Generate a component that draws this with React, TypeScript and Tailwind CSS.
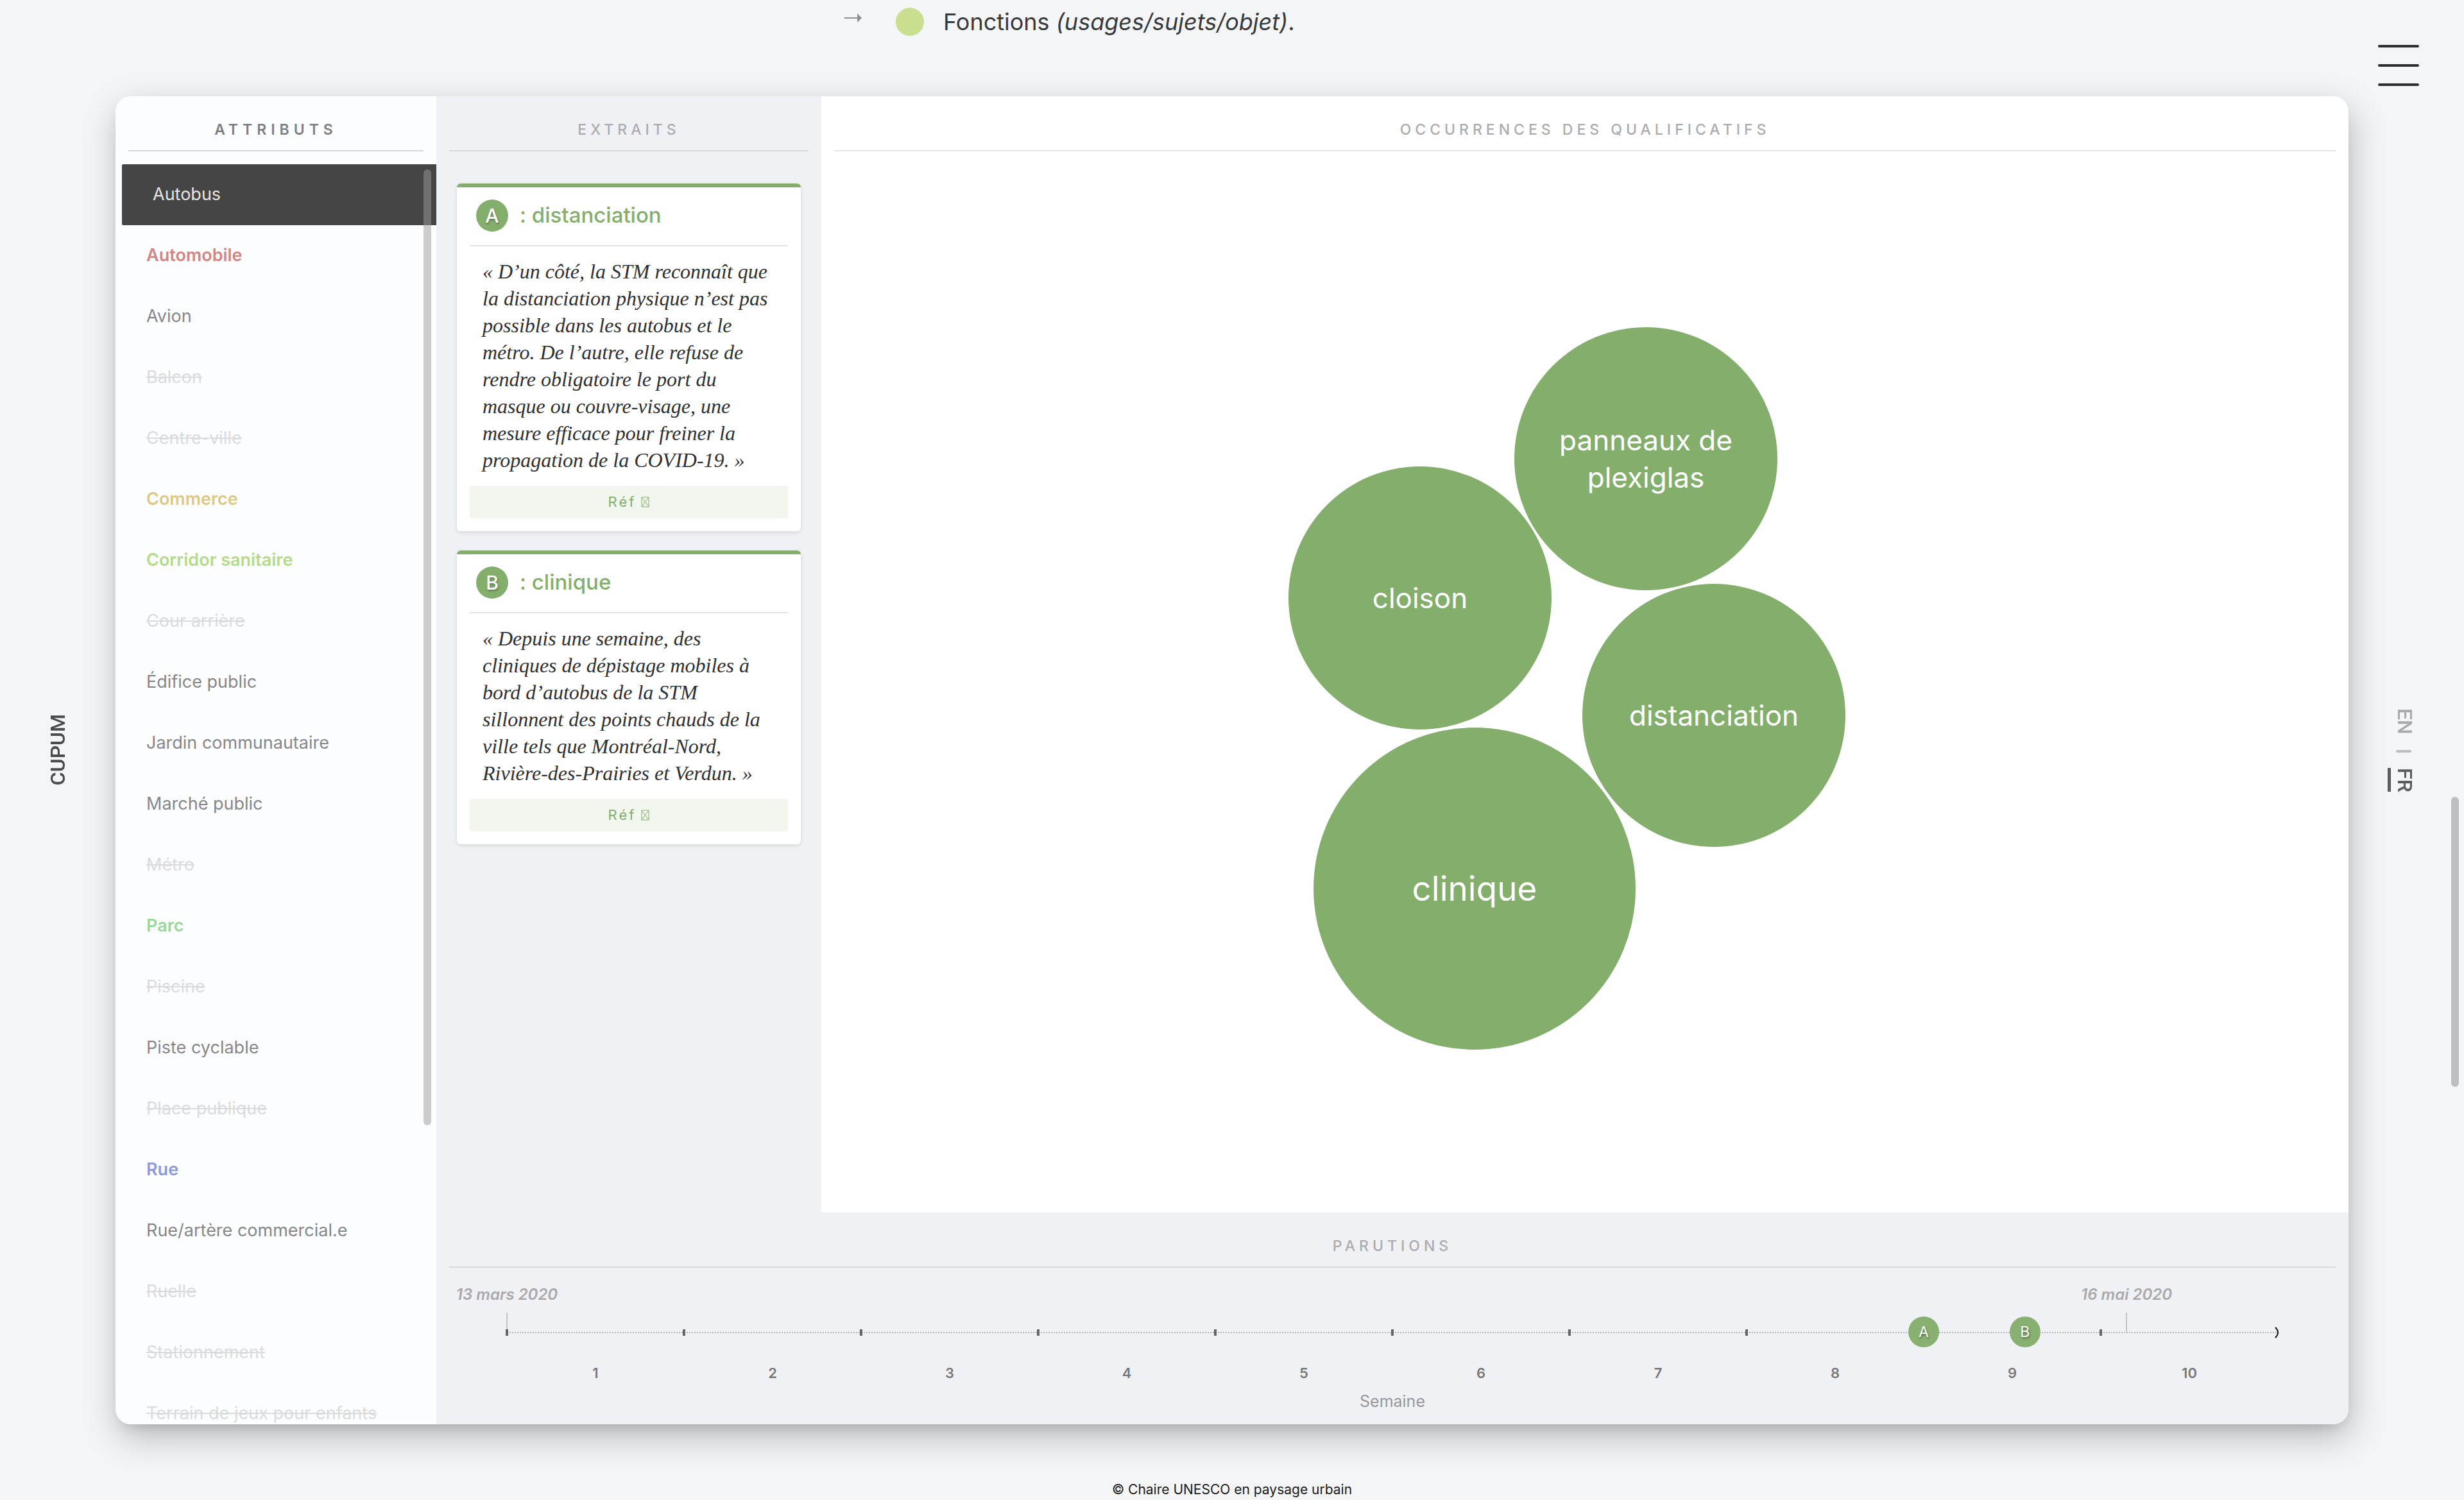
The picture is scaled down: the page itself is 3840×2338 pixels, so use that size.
import React from "react";

type Tone = "normal" | "off" | "active" | "red" | "gold" | "lime" | "mint" | "blue";

const TONES: Record<Tone, string> = {
  normal: "ml-2.5 pl-[38px] text-[#868789]",
  off: "ml-2.5 pl-[38px] text-[#dadbdd] line-through decoration-2",
  active: "ml-2.5 pl-12 rounded-l-xs bg-[#454545] text-[#e6e6e6]",
  red: "ml-2.5 pl-[38px] font-semibold text-[#d08785]",
  gold: "ml-2.5 pl-[38px] font-semibold text-[#dcc887]",
  lime: "ml-2.5 pl-[38px] font-semibold text-[#b4dc88]",
  mint: "ml-2.5 pl-[38px] font-semibold text-[#97d99c]",
  blue: "ml-2.5 pl-[38px] font-semibold text-[#8e9adb]",
};

const ATTRIBUTES: [string, Tone][] = [
  ["Autobus", "active"],
  ["Automobile", "red"],
  ["Avion", "normal"],
  ["Balcon", "off"],
  ["Centre-ville", "off"],
  ["Commerce", "gold"],
  ["Corridor sanitaire", "lime"],
  ["Cour arrière", "off"],
  ["Édifice public", "normal"],
  ["Jardin communautaire", "normal"],
  ["Marché public", "normal"],
  ["Métro", "off"],
  ["Parc", "mint"],
  ["Piscine", "off"],
  ["Piste cyclable", "normal"],
  ["Place publique", "off"],
  ["Rue", "blue"],
  ["Rue/artère commercial.e", "normal"],
  ["Ruelle", "off"],
  ["Stationnement", "off"],
  ["Terrain de jeux pour enfants", "off"],
];

const EXTRACTS = [
  {
    letter: "A",
    word: "distanciation",
    lines: [
      "« D’un côté, la STM reconnaît que",
      "la distanciation physique n’est pas",
      "possible dans les autobus et le",
      "métro. De l’autre, elle refuse de",
      "rendre obligatoire le port du",
      "masque ou couvre-visage, une",
      "mesure efficace pour freiner la",
      "propagation de la COVID-19. »",
    ],
  },
  {
    letter: "B",
    word: "clinique",
    lines: [
      "« Depuis une semaine, des",
      "cliniques de dépistage mobiles à",
      "bord d’autobus de la STM",
      "sillonnent des points chauds de la",
      "ville tels que Montréal-Nord,",
      "Rivière-des-Prairies et Verdun. »",
    ],
  },
];

const BUBBLES = [
  { x: 1285, y: 565, r: 205, size: 44, lines: ["panneaux de", "plexiglas"] },
  { x: 933, y: 782, r: 205, size: 44, lines: ["cloison"] },
  { x: 1391, y: 965, r: 205, size: 44, lines: ["distanciation"] },
  { x: 1018, y: 1235, r: 251, size: 53, lines: ["clinique"] },
];

const WEEKS = [1, 2, 3, 4, 5, 6, 7, 8, 9, 10];

const MARKERS = [
  { letter: "A", day: 80 },
  { letter: "B", day: 85.72 },
];

function PanelTitle({ children, strong = false }: { children: string; strong?: boolean }) {
  return (
    <h2
      className={
        strong
          ? "mx-5 border-b-2 border-[#d6d7d8] pt-9 pb-4 text-center text-[23px] leading-8 font-semibold tracking-[7px] text-[#7e7f80]"
          : "mx-5 border-b-2 border-black/10 pt-9 pb-4 text-center text-[23px] leading-8 font-medium tracking-[6px] text-[#acacae]"
      }
    >
      {children}
    </h2>
  );
}

function AttributePanel() {
  return (
    <aside className="relative row-span-2 flex flex-col overflow-hidden bg-[#fcfdff] [contain:size]">
      <PanelTitle strong>ATTRIBUTS</PanelTitle>
      <ul className="mt-5 min-h-0 flex-1 overflow-hidden">
        {ATTRIBUTES.map(([name, tone]) => (
          <li key={name} className="flex h-[95px]">
            <button type="button" className={`flex-1 text-left text-[27px] ${TONES[tone]}`}>
              {name}
            </button>
          </li>
        ))}
      </ul>
      <div className="absolute top-[114px] right-2 h-[72%] w-3 rounded-full bg-[#9b9b9b]/50" />
    </aside>
  );
}

function MissingGlyph() {
  return (
    <svg viewBox="0 0 13 17" className="h-[17px] w-[13px]" fill="none" stroke="currentColor" aria-hidden="true">
      <path d="M1 1h11v15H1zM1 1l11 15M12 1L1 16" />
    </svg>
  );
}

function ExtractPanel() {
  return (
    <section className="bg-[#f0f1f5]">
      <PanelTitle>EXTRAITS</PanelTitle>
      <div className="mx-8 mt-[50px] flex flex-col gap-[30px]">
        {EXTRACTS.map((e) => (
          <article
            key={e.letter}
            className="rounded-md border-t-6 border-[#84ae6c] bg-white px-5 pb-5 shadow-[0_2px_6px_rgba(0,0,0,0.12)]"
          >
            <h3 className="flex h-[92px] items-center gap-[18px] border-b-2 border-[#e3e3e4] pl-2.5 pb-0.5 text-[33px] font-medium text-[#84ae6c]">
              <span className="flex size-[50px] items-center justify-center rounded-full bg-[#84ae6c] text-[30px] text-white text-shadow-[1px_2px_3px_rgba(0,0,0,0.3)]">
                {e.letter}
              </span>
              : {e.word}
            </h3>
            <blockquote className="pt-[18px] pb-[19px] pl-5 font-['Liberation_Serif',serif] text-[32px] leading-[42px] whitespace-nowrap text-[#2f3031] italic">
              {e.lines.map((line) => (
                <p key={line}>{line}</p>
              ))}
            </blockquote>
            <a
              href="#reference"
              className="flex h-[51px] w-full items-center justify-center gap-2 rounded-sm bg-[#f1f6ee] text-[22px] tracking-[3px] text-[#84ae6c]"
            >
              Réf <MissingGlyph />
            </a>
          </article>
        ))}
      </div>
    </section>
  );
}

function BubblePanel() {
  return (
    <section className="relative aspect-[2380/1740] bg-white">
      <PanelTitle>OCCURRENCES DES QUALIFICATIFS</PanelTitle>
      <svg viewBox="0 0 2380 1740" className="absolute inset-0 size-full" role="img" aria-label="Occurrences des qualificatifs">
        {BUBBLES.map((b) => (
          <g key={b.lines[0]}>
            <circle cx={b.x} cy={b.y} r={b.r} fill="#84ae6c" />
            <text fill="#fff" fontSize={b.size} textAnchor="middle">
              {b.lines.map((line, i) => (
                <tspan key={line} x={b.x} y={b.y + Math.round(b.size * 0.36) + (i - (b.lines.length - 1) / 2) * 58}>
                  {line}
                </tspan>
              ))}
            </text>
          </g>
        ))}
      </svg>
    </section>
  );
}

function DateFlag({ label }: { label: string }) {
  return (
    <div className="flex w-60 flex-col items-center">
      <span className="text-[24px] leading-8 font-semibold text-[#a8a9ab] italic">{label}</span>
      <span className="mt-3 h-[30px] w-0.5 bg-[#c4c5c7]" />
    </div>
  );
}

function TimelinePanel() {
  return (
    <section className="col-span-2 h-[330px] bg-[#f0f1f5]">
      <PanelTitle>PARUTIONS</PanelTitle>
      <div className="relative mx-[110px] mt-[100px]">
        <div className="absolute bottom-full left-0 -translate-x-1/2">
          <DateFlag label="13 mars 2020" />
        </div>
        <div className="absolute bottom-full left-[91.45%] -translate-x-1/2">
          <DateFlag label="16 mai 2020" />
        </div>
        <div className="h-0.5 bg-[repeating-linear-gradient(90deg,#b4b5b8_0_2px,transparent_2px_4px)]" />
        <svg viewBox="0 0 10 18" className="absolute -top-2 -right-1 h-[18px] w-2.5" fill="none" stroke="#111" strokeWidth="2" aria-hidden="true">
          <path d="M2 1Q10 9 2 17" />
        </svg>
        <ol className="grid grid-cols-10">
          {WEEKS.map((w) => (
            <li key={w} className="relative pt-[46px] text-center text-[22px] leading-8 font-semibold text-[#77787a]">
              <span className="absolute -top-1.5 -left-0.5 h-2.5 w-1 bg-[#646567]" />
              {w}
            </li>
          ))}
        </ol>
        {MARKERS.map((m) => (
          <button
            key={m.letter}
            type="button"
            className="absolute -top-6 flex size-12 -translate-x-1/2 items-center justify-center rounded-full bg-[#88b071] text-[23px] text-white text-shadow-[1px_2px_3px_rgba(0,0,0,0.4)]"
            style={{ left: `${m.day}%` }}
          >
            {m.letter}
          </button>
        ))}
        <p className="mt-3 text-center text-[25px] leading-8 text-[#97989a]">Semaine</p>
      </div>
    </section>
  );
}

function SideRails() {
  return (
    <>
      <div className="fixed inset-y-0 left-[72px] flex items-center">
        <a href="#cupum" className="rotate-180 font-[Roboto,sans-serif] text-[32px] leading-9 font-medium text-[#4b4b4c] [writing-mode:vertical-rl]">
          CUPUM
        </a>
      </div>
      <nav className="fixed inset-y-0 right-[74px] flex flex-col items-end justify-center gap-6 font-[Roboto,sans-serif] text-[32px] leading-9 font-medium">
        <a href="#en" className="text-[#a9aaab] [writing-mode:vertical-rl]">
          EN
        </a>
        <span className="mr-2 h-1 w-6 rounded-full bg-[#bcbdbe]" />
        <a href="#fr" className="border-l-5 border-[#5c5c5d] pl-1 text-[#5c5c5d] [writing-mode:vertical-rl]">
          FR
        </a>
      </nav>
      <button type="button" aria-label="Menu" className="fixed top-[70px] right-[70px] flex w-16 flex-col gap-[26px]">
        <span className="h-1 rounded-full bg-[#2d2d30]" />
        <span className="h-1 rounded-full bg-[#2d2d30]" />
        <span className="h-1 rounded-full bg-[#2d2d30]" />
      </button>
      <div className="fixed top-[1242px] right-2 h-[452px] w-3 rounded-full bg-[#bdbebf]" />
    </>
  );
}

export default function App() {
  return (
    <div className="min-h-screen overflow-hidden bg-[#f4f5f7] font-[Inter,sans-serif]">
      <div className="flex h-[150px] items-start pl-[1316px]">
        <div className="mt-2 flex h-[52px] items-center text-[36px] text-[#38393a]">
          <svg viewBox="0 0 28 16" className="mr-[52px] mb-3 h-4 w-7" fill="none" stroke="#8f9092" strokeWidth="2" aria-hidden="true">
            <path d="M0 8h22" />
            <path d="M20 1l7 7-7 7z" fill="#8f9092" stroke="none" />
          </svg>
          <span className="mr-[30px] size-11 rounded-full bg-[#c9df8f]" />
          <p>
            Fonctions <em>(usages/sujets/objet)</em>.
          </p>
        </div>
      </div>

      <main className="mx-[180px] grid grid-cols-[500px_600px_1fr] overflow-hidden rounded-3xl shadow-[4px_20px_56px_rgba(0,0,0,0.24),0_12px_24px_-12px_rgba(0,0,0,0.2)]">
        <AttributePanel />
        <ExtractPanel />
        <BubblePanel />
        <TimelinePanel />
      </main>

      <footer className="pt-[88px] text-center text-[21px] leading-7 text-[#1a1a1a]">© Chaire UNESCO en paysage urbain</footer>

      <SideRails />
    </div>
  );
}
